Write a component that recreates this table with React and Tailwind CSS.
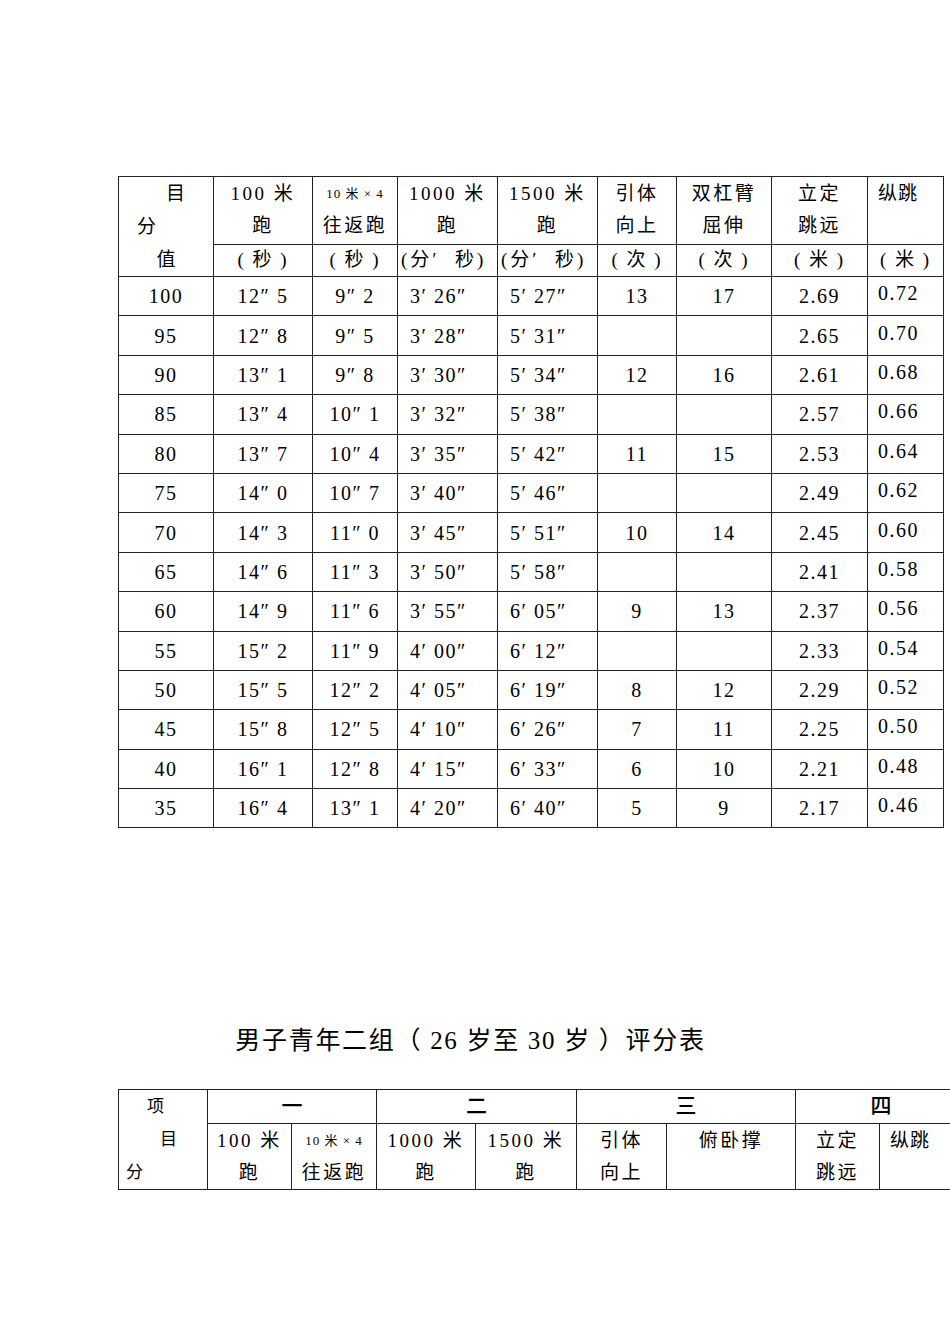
import React from "react";

const rows = [
  ["100", "12″ 5", "9″ 2", "3′ 26″", "5′ 27″", "13", "17", "2.69", "0.72"],
  ["95", "12″ 8", "9″ 5", "3′ 28″", "5′ 31″", "", "", "2.65", "0.70"],
  ["90", "13″ 1", "9″ 8", "3′ 30″", "5′ 34″", "12", "16", "2.61", "0.68"],
  ["85", "13″ 4", "10″ 1", "3′ 32″", "5′ 38″", "", "", "2.57", "0.66"],
  ["80", "13″ 7", "10″ 4", "3′ 35″", "5′ 42″", "11", "15", "2.53", "0.64"],
  ["75", "14″ 0", "10″ 7", "3′ 40″", "5′ 46″", "", "", "2.49", "0.62"],
  ["70", "14″ 3", "11″ 0", "3′ 45″", "5′ 51″", "10", "14", "2.45", "0.60"],
  ["65", "14″ 6", "11″ 3", "3′ 50″", "5′ 58″", "", "", "2.41", "0.58"],
  ["60", "14″ 9", "11″ 6", "3′ 55″", "6′ 05″", "9", "13", "2.37", "0.56"],
  ["55", "15″ 2", "11″ 9", "4′ 00″", "6′ 12″", "", "", "2.33", "0.54"],
  ["50", "15″ 5", "12″ 2", "4′ 05″", "6′ 19″", "8", "12", "2.29", "0.52"],
  ["45", "15″ 8", "12″ 5", "4′ 10″", "6′ 26″", "7", "11", "2.25", "0.50"],
  ["40", "16″ 1", "12″ 8", "4′ 15″", "6′ 33″", "6", "10", "2.21", "0.48"],
  ["35", "16″ 4", "13″ 1", "4′ 20″", "6′ 40″", "5", "9", "2.17", "0.46"],
];

const cell = "border border-[#222] p-0";
const hd = "text-[19px] tracking-[2.5px] leading-[32px]";

function Two({ a, b, small }) {
  return (
    <div className="pt-[1px] text-center">
      <div className={small ? "text-[13px] tracking-[1px] leading-[32px]" : hd}>{a}</div>
      <div className={hd}>{b}</div>
    </div>
  );
}

const units = [
  ["( 秒 )", "text-center tracking-[2px]"],
  ["( 秒 )", "text-center tracking-[2px]"],
  ["(分′  秒)", "text-left pl-[3px] tracking-[3px]"],
  ["(分′  秒)", "text-left pl-[3px] tracking-[3px]"],
  ["( 次 )", "text-center tracking-[2px]"],
  ["( 次 )", "text-center tracking-[2px]"],
  ["( 米 )", "text-center tracking-[2px]"],
  ["( 米 )", "text-center tracking-[2px]"],
];

export default function App() {
  return (
    <div className="w-[950px] h-[1344px] overflow-hidden bg-white text-black font-['Liberation_Serif','Noto_Sans_CJK_SC',serif]">
      <div className="pt-[176px] pl-[118px]">
        <table className="border-collapse table-fixed w-[825px]">
          <colgroup>
            <col className="w-[95px]" />
            <col className="w-[99px]" />
            <col className="w-[85px]" />
            <col className="w-[100px]" />
            <col className="w-[100px]" />
            <col className="w-[79px]" />
            <col className="w-[95px]" />
            <col className="w-[96px]" />
            <col className="w-[76px]" />
          </colgroup>
          <tbody>
            <tr className="h-[67px]">
              <td rowSpan={2} className={cell + " align-top"}>
                <div className="text-[19px] leading-[33px]">
                  <div className="pl-[47px]">目</div>
                  <div className="pl-[18px]">分</div>
                  <div className="text-center">值</div>
                </div>
              </td>
              <td className={cell + " align-top"}><Two a="100 米" b="跑" /></td>
              <td className={cell + " align-top"}><Two a="10 米 × 4" b="往返跑" small /></td>
              <td className={cell + " align-top"}><Two a="1000 米" b="跑" /></td>
              <td className={cell + " align-top"}><Two a="1500 米" b="跑" /></td>
              <td className={cell + " align-top"}><Two a="引体" b="向上" /></td>
              <td className={cell + " align-top"}><Two a="双杠臂" b="屈伸" /></td>
              <td className={cell + " align-top"}><Two a="立定" b="跳远" /></td>
              <td className={cell + " align-top"}>
                <div className={"pt-[1px] pl-[10px] text-[19px] tracking-[1px] leading-[32px]"}>纵跳</div>
              </td>
            </tr>
            <tr className="h-[32px]">
              {units.map(([t, a], i) => (
                <td key={i} className={cell + " " + a + " text-[19px] leading-[30px] whitespace-pre"}>{t}</td>
              ))}
            </tr>
            {rows.map((r, i) => (
              <tr key={i} className="h-[39.4px]">
                {r.map((v, j) => {
                  let align = "text-center";
                  if (j === 3 || j === 4) align = "text-left pl-[12px]";
                  if (j === 8) align = "text-left pl-[10px] pb-[6px]";
                  return (
                    <td key={j} className={cell + " " + align + " text-[20px] tracking-[1.5px] whitespace-pre"}>
                      {v}
                    </td>
                  );
                })}
              </tr>
            ))}
          </tbody>
        </table>
      </div>

      <div className="mt-[193px] pr-[9px] text-center text-[25px] tracking-[1.7px] leading-[40px] whitespace-pre">
        男子青年二组（ 26 岁至 30 岁 ）评分表
      </div>

      <div className="mt-[28px] pl-[118px]">
        <table className="border-collapse table-fixed w-[848px]">
          <colgroup>
            <col className="w-[89px]" />
            <col className="w-[84px]" />
            <col className="w-[85px]" />
            <col className="w-[99px]" />
            <col className="w-[101px]" />
            <col className="w-[90px]" />
            <col className="w-[129px]" />
            <col className="w-[84px]" />
            <col className="w-[87px]" />
          </colgroup>
          <tbody>
            <tr className="h-[33px]">
              <td rowSpan={2} className={cell + " align-top"}>
                <div className="text-[17px] leading-[33px]">
                  <div className="pl-[28px]">项</div>
                  <div className="pl-[41px]">目</div>
                  <div className="pl-[7px]">分</div>
                </div>
              </td>
              <td colSpan={2} className={cell + " text-center text-[21px] font-medium"}>一</td>
              <td colSpan={2} className={cell + " text-center text-[21px] font-medium"}>二</td>
              <td colSpan={2} className={cell + " text-center text-[21px] font-medium"}>三</td>
              <td colSpan={2} className={cell + " text-center text-[21px] font-medium"}>四</td>
            </tr>
            <tr className="h-[66px]">
              <td className={cell + " align-top"}><Two a="100 米" b="跑" /></td>
              <td className={cell + " align-top"}><Two a="10 米 × 4" b="往返跑" small /></td>
              <td className={cell + " align-top"}><Two a="1000 米" b="跑" /></td>
              <td className={cell + " align-top"}><Two a="1500 米" b="跑" /></td>
              <td className={cell + " align-top"}><Two a="引体" b="向上" /></td>
              <td className={cell + " align-top"}><Two a="俯卧撑" b="" /></td>
              <td className={cell + " align-top"}><Two a="立定" b="跳远" /></td>
              <td className={cell + " align-top"}>
                <div className={"pt-[1px] pl-[10px] text-[19px] tracking-[1px] leading-[32px]"}>纵跳</div>
              </td>
            </tr>
          </tbody>
        </table>
      </div>
    </div>
  );
}
